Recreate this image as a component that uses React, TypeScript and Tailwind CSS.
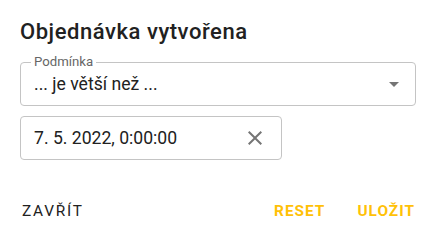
export default function App() {
  return (
    <div className="w-[436px] h-[251px] bg-white px-5 font-['Roboto',sans-serif] text-[#212121]">
      <h2 className="pt-4 text-[22px] leading-8 font-medium tracking-[0.55px]">Objednávka vytvořena</h2>

      <fieldset className="mt-2 h-[50px] border border-[#c4c4c4] rounded px-[13px]">
        <legend className="px-[3px] -ml-[3px] text-[13.2px] leading-3 text-[#666]">Podmínka</legend>
        <div className="mt-1 h-6 flex items-center justify-between">
          <span className="text-[17.6px] leading-6">... je větší než ...</span>
          <svg viewBox="0 0 24 24" className="w-6 h-6 mr-[-4px] fill-[#757575]">
            <path d="M7 10l5 5 5-5z" />
          </svg>
        </div>
      </fieldset>

      <div className="mt-[10px] w-[262px] h-[44px] border border-[#c4c4c4] rounded flex items-center justify-between pl-[13px] pr-[14px]">
        <span className="text-[17.6px] leading-6">7. 5. 2022, 0:00:00</span>
        <svg viewBox="0 0 24 24" className="w-6 h-6 fill-[#757575]">
          <path d="M19 6.41L17.59 5 12 10.59 6.41 5 5 6.41 10.59 12 5 17.59 6.41 19 12 13.41 17.59 19 19 17.59 13.41 12z" />
        </svg>
      </div>

      <div className="mt-[34px] h-9 flex items-center justify-between pl-[2px] pr-[1px] text-[15.4px] uppercase">
        <span className="tracking-[1.75px] text-[#212121]">Zavřít</span>
        <div className="flex gap-[32px] font-bold text-[#ffc107] tracking-[1px]">
          <span>Reset</span>
          <span>Uložit</span>
        </div>
      </div>
    </div>
  )
}
